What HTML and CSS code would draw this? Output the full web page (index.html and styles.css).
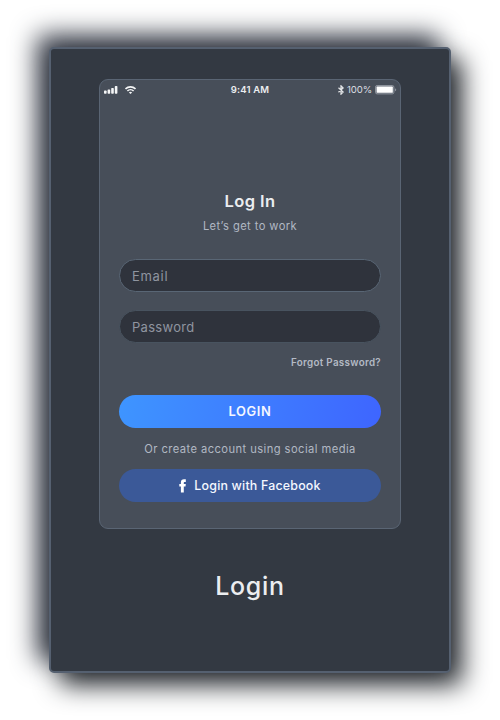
FILE: index.html
```
<!DOCTYPE html>
<html lang="en">
<head>
<meta charset="utf-8">
<title>Login</title>
<link rel="stylesheet" href="styles.css">
</head>
<body>
<main class="card">
  <section class="phone">
    <header class="status">
      <div class="status-left">
        <svg width="14" height="8" viewBox="0 0 14 8" fill="#f5f6f7"><rect x="0" y="4.6" width="2.6" height="3.2" rx=".7"/><rect x="3.6" y="3.4" width="2.6" height="4.4" rx=".7"/><rect x="7.2" y="2" width="2.6" height="5.8" rx=".7"/><rect x="10.8" y="0" width="2.6" height="7.8" rx=".7"/></svg>
        <svg width="11" height="8" viewBox="0 0 11 8" fill="none" stroke="#f5f6f7" stroke-width="1.6"><path d="M.5 2.9a7.1 7.1 0 0 1 10 0M2.4 5a4.4 4.4 0 0 1 6.2 0"/><path d="M5.5 8 3.9 6.4a2.3 2.3 0 0 1 3.2 0z" fill="#f5f6f7" stroke="none"/></svg>
      </div>
      <span class="time">9:41 AM</span>
      <div class="status-right">
        <svg width="6" height="10" viewBox="0 0 6 10" fill="none" stroke="#e6e8ea" stroke-width="1.2"><path d="M.5 2.7 5.2 7 3 9.2V.8l2.2 2.2L.5 7.3"/></svg>
        <span class="percent">100%</span>
        <svg width="22" height="10" viewBox="0 0 22 10"><rect x=".5" y=".5" width="18.4" height="8.4" rx="1.6" fill="#606772" stroke="#8d939c"/><rect x="1.6" y="1.6" width="16.2" height="6.2" rx=".6" fill="#fff"/><path d="M20 3.2q1.2.5 1.2 1.5T20 6.2z" fill="#8d939c"/></svg>
      </div>
    </header>
    <h1 class="heading">Log In</h1>
    <p class="tagline">Let’s get to work</p>
    <div class="field field-email"><span>Email</span></div>
    <div class="field field-password"><span>Password</span></div>
    <a class="forgot">Forgot Password?</a>
    <button class="button login">LOGIN</button>
    <p class="social">Or create account using social media</p>
    <button class="button facebook">
      <svg width="8" height="14" viewBox="0 0 8 14" fill="#fff"><path d="M1.9 13.6V7.4H.3V4.9h1.6V3.4C1.9 1.4 3 .3 5 .3h1.8V3H5.7c-.7 0-.9.3-.9.9v1h2l-.3 2.5H4.8v6.2z"/></svg>
      <span>Login with Facebook</span>
    </button>
  </section>
  <h2 class="caption">Login</h2>
</main>
</body>
</html>
```
FILE: styles.css
```
* { box-sizing: border-box; }
html, body { margin: 0; height: 720px; overflow: hidden; background: #fff; }
body { display: flow-root; font-family: Inter, sans-serif; color: #ebedf0; }
h1, h2, p { margin: 0; font-weight: 500; }

.card {
  display: flex;
  flex-direction: column;
  align-items: center;
  width: 402px;
  height: 626px;
  margin: 47px 0 0 49px;
  padding-top: 30px;
  border: 2px solid #556070;
  border-radius: 5px;
  background: #333942;
  box-shadow: 11px 12px 26px #24282d, -12px -12px 26px #333844;
}

.phone {
  display: flex;
  flex-direction: column;
  width: 302px;
  height: 450px;
  padding: 0 19px;
  border: 1px solid #5a6574;
  border-radius: 9px;
  background: #474e59;
}

.status {
  display: grid;
  grid-template-columns: 1fr auto 1fr;
  align-items: center;
  height: 19px;
  margin: 0 -16px;
}
.status svg { display: block; }
.status-left { display: flex; gap: 7px; padding-left: .5px; }
.status-right { display: flex; align-items: center; justify-content: flex-end; gap: 3px; }
.time { font-size: 9.5px; font-weight: 600; letter-spacing: .15px; }
.percent { font-size: 9.6px; color: #dcdfe3; letter-spacing: -.1px; }

.heading { margin-top: 92px; font-size: 16.5px; line-height: 20px; font-weight: 600; text-align: center; letter-spacing: .4px; }
.tagline { margin-top: 7px; font-size: 11.2px; line-height: 16px; font-weight: 400; text-align: center; color: #b1b8c3; letter-spacing: .4px; }

.field {
  display: flex;
  align-items: center;
  flex: none;
  width: 262px;
  height: 33px;
  padding-left: 12px;
  border: 1px solid #596675;
  border-radius: 17px;
  background: #2f333c;
  color: #8f95a0;
  font-size: 13px;
}
.field-email { margin-top: 25px; letter-spacing: .7px; }
.field-password { margin-top: 18px; border-color: #48535f; letter-spacing: .3px; }
.forgot { margin-top: 13px; font-size: 9.8px; line-height: 14px; font-weight: 600; text-align: right; color: #b4bac5; letter-spacing: .32px; }

.button {
  display: flex;
  align-items: center;
  justify-content: center;
  flex: none;
  width: 262px;
  height: 33px;
  padding: 0;
  border: 0;
  border-radius: 17px;
  color: #f4f7ff;
  font-family: inherit;
}
.login { margin-top: 25px; background: linear-gradient(100deg, #3e95ff, #3e65ff); font-size: 12.9px; font-weight: 600; letter-spacing: .6px; }
.social { margin-top: 13px; font-size: 11.2px; line-height: 16px; font-weight: 400; color: #b1b8c3; text-align: center; letter-spacing: .43px; white-space: nowrap; }
.facebook { margin-top: 12px; gap: 7px; background: #3b5998; font-size: 12.4px; font-weight: 500; letter-spacing: .2px; }

.caption { margin-top: 40px; font-size: 25px; line-height: 34px; font-weight: 500; letter-spacing: .7px; }
```
